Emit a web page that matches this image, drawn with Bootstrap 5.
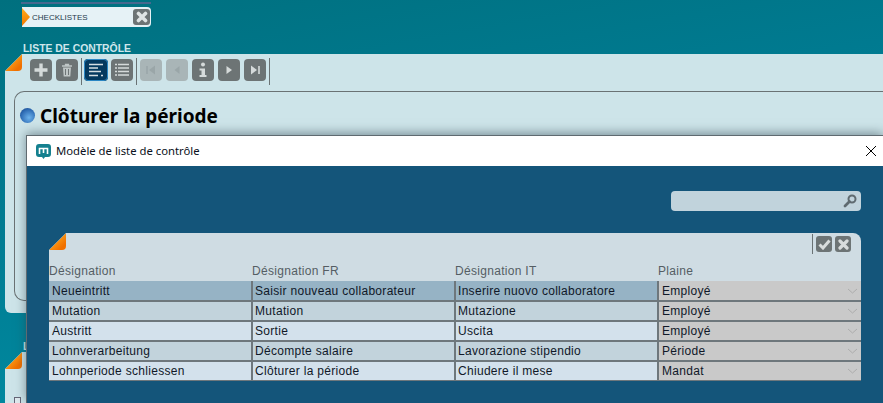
<!DOCTYPE html>
<html lang="fr">
<head>
<meta charset="utf-8">
<title>Checklistes</title>
<link href="https://cdn.jsdelivr.net/npm/bootstrap@5.3.0/dist/css/bootstrap.min.css" rel="stylesheet">
<style>
html,body{height:100%;margin:0;overflow:hidden}
body{font-family:"Liberation Sans",Arial,sans-serif;color:#111;background:#007c93}
.desk{position:relative;width:883px;height:403px;overflow:hidden;background:linear-gradient(170deg,#00707f 0,#007a90 35%,#0091a8 100%)}
.deskline{width:130px;height:2px;margin:2px 0 0 21px;background:#46688e}
.tabchip{width:129px;height:20px;margin:3px 0 0 22px;background:#e6f2f6;border-radius:0 4px 4px 0;position:relative;padding-left:10px;font-size:8px;line-height:21px;color:#243a4c}
.tabarrow{position:absolute;left:0;top:1px;width:8px;height:18px;background:linear-gradient(180deg,#ffab1a,#f07800);clip-path:polygon(0 0,100% 50%,0 100%)}
.tabclose{position:absolute;right:1px;top:2px;width:17px;height:16px;border-radius:3px;background:#6d7475}
.seclabel{margin:14px 0 0 23px;padding-top:2px;font-size:10.4px;line-height:11px;font-weight:700;color:#cfe6ec;height:13px;overflow:hidden}
.seclabel-b{margin-top:26px}
.shell{position:relative;margin-left:5px;background:#cde4e9;clip-path:polygon(17px 0,100% 0,100% 100%,0 100%,0 17px);border-radius:0 0 0 6px}
.shell-a{height:259px;padding:5px 0 0 25px}
.shell-b{height:60px;padding:45px 0 0 9px}
.dogear{position:absolute;left:0;top:0;width:17px;height:17px;background:linear-gradient(135deg,#ffb020 20%,#f07000 80%);clip-path:polygon(100% 0,100% 100%,0 100%);border-bottom-right-radius:4px}
.tools{height:22px;gap:3px}
.toolbtn{width:22px;height:22px;border-radius:4px;background:#6d7475;border:0;padding:0;display:flex;align-items:center;justify-content:center;flex:none}
.toolbtn.grp{margin-right:1px}
.toolbtn.off{background:#a9b5b7}
.toolbtn.on{width:24px;background:#04395f;outline:1px solid #2a86c4;outline-offset:-1px}
.toolsep{width:1px;height:27px;background:#6a7274;flex:none;margin-top:-1px}
.toolsep.tight{margin-right:-1px}
.innerbox{margin:10px 0 0 -16px;height:210px;border:1px solid #6a7274;border-right:0;border-radius:10px 0 0 10px;padding:12px 0 0 5px}
.orb{width:15px;height:15px;border-radius:50%;background:radial-gradient(circle at 60% 65%,#6cb2ec,#2a66b0 65%,#1b3f74);flex:none}
.pagetitle{font-family:"Noto Sans",sans-serif;font-weight:700;font-size:19px;line-height:24px;margin:0 0 0 1px;color:#000}
.tree{width:7px;height:7px;border:1px solid #667;background:#dfe9ee}
.dlg{position:absolute;left:26px;top:135px;width:857px;height:268px;background:#14557a;border-left:1px solid #5f6a70;border-top:1px solid #5f6a70;box-shadow:0 -2px 10px rgba(40,60,70,.5)}
.dlghead{height:30px;background:#fff;padding-left:9px;font-family:"Noto Sans",sans-serif;font-size:11.3px;color:#0a1020}
.dlgtitle{gap:5px}
.dlgx{margin-right:6px;background:none;border:0;padding:0;display:flex}
.finder{width:190px;height:20px;margin:25px 0 0 644px;background:#c1d3dc;border-radius:4px;padding-right:4px}
.gridpanel{position:relative;width:812px;margin:22px 0 0 22px;background:#cfdce3;clip-path:polygon(17px 0,100% 0,100% 100%,0 100%,0 17px);border-top-right-radius:8px;height:148px}
.gridtop{height:29px;padding:1px 10px 0 0;gap:3px}
.gridsep{width:1px;height:20px;background:#6a7274}
.smallbtn{width:16px;height:16px;border-radius:3px;background:#6d7475;border:0;padding:0;display:flex;align-items:center;justify-content:center;margin-top:2px}
.gridtable{width:812px;table-layout:fixed;border-collapse:collapse;font-size:12px;letter-spacing:.3px;margin:0;color:#101828}
.gridtable th{font-weight:400;color:#555e64;height:19px;padding:0 0 2px;line-height:14px;vertical-align:middle;background:transparent;border:0}
.gridtable td{height:20px;padding:0 0 0 2px;line-height:18px;border-bottom:2px solid #6e777c;border-left:2px solid #6e777c;vertical-align:middle;background:#d3e1ec}
.gridtable td:first-child{border-left:0;padding-left:3px}
.gridtable tr.alt td{background:#c2d3dc}
.gridtable tr.sel td{background:#96b3c5}
.gridtable tr td.plaincell{background:#c9c9c9;padding:0;border-right:1px solid #8a8f92}
.gridsel{display:block;width:100%;height:18px;border:0;border-radius:0;background-color:#c9c9c9;font-size:12px;letter-spacing:.3px;line-height:18px;padding:0 0 0 3px;color:#101828;background-size:11px 8px;background-position:right 3px center;background-image:url("data:image/svg+xml,%3csvg xmlns='http://www.w3.org/2000/svg' viewBox='0 0 11 8'%3e%3cpath fill='none' stroke='%23adadad' d='M1 2l4.5 4L10 2'/%3e%3c/svg%3e")}
.gridsel:focus{box-shadow:none}
</style>
</head>
<body>
<div class="desk">
  <div class="deskline"></div>
  <div class="tabchip"><span class="tabarrow"></span>CHECKLISTES
    <span class="tabclose d-flex align-items-center justify-content-center"><svg width="12" height="12" viewBox="0 0 12 12"><path d="M2.500 2.500l7 7M9.500 2.500l-7 7" stroke="#dfe4e4" stroke-width="3.600" stroke-linecap="round"/></svg></span>
  </div>
  <div class="seclabel">LISTE DE CONTRÔLE</div>
  <div class="shell shell-a">
    <span class="dogear"></span>
    <div class="tools d-flex align-items-start">
      <button class="toolbtn grp"><svg width="16" height="16" viewBox="0 0 16 16"><path d="M8 1.500v13M1.500 8h13" stroke="#d5dada" stroke-width="3.400"/></svg></button>
      <button class="toolbtn"><svg width="14" height="15" viewBox="0 0 14 15"><path d="M2 3h10M5.500 3V1.500h3V3" fill="none" stroke="#bfc6c6" stroke-width="1.300"/><path d="M3 4.500h8l-.7 9H3.700z" fill="#bfc6c6"/><path d="M5.500 6v6M8.500 6v6" stroke="#6d7475"/></svg></button>
      <span class="toolsep tight"></span>
      <button class="toolbtn on"><svg width="16" height="14" viewBox="0 0 16 14"><path d="M1 1.500h14M1 5h9M1 8.500h12M1 12.500h9M13 12.500h2" stroke="#d5dee2" stroke-width="1.300"/></svg></button>
      <button class="toolbtn"><svg width="16" height="14" viewBox="0 0 16 14"><path d="M4 1.500h11M4 5h11M4 8.500h11M4 12h11M1 1.500h2M1 5h2M1 8.500h2M1 12h2" stroke="#d5dada" stroke-width="1.400"/></svg></button>
      <span class="toolsep"></span>
      <button class="toolbtn off grp"><svg width="12" height="12" viewBox="0 0 12 12"><path d="M2 2v8" stroke="#9aa6a8" stroke-width="1.500"/><path d="M10 1.500v9L4 6z" fill="#9aa6a8"/></svg></button>
      <button class="toolbtn off grp"><svg width="12" height="12" viewBox="0 0 12 12"><path d="M8.500 2v8L3.500 6z" fill="#9aa6a8"/></svg></button>
      <button class="toolbtn grp"><svg width="12" height="16" viewBox="0 0 12 16"><circle cx="6" cy="2.500" r="2" fill="#d5dada"/><path d="M2.500 6.500h5.500v6.500h1.500v2h-7v-2H4.500V8.500h-2z" fill="#d5dada"/></svg></button>
      <button class="toolbtn grp"><svg width="12" height="12" viewBox="0 0 12 12"><path d="M3.500 2v8L9 6z" fill="#d5dada"/></svg></button>
      <button class="toolbtn"><svg width="12" height="12" viewBox="0 0 12 12"><path d="M2 1.500v9L8 6z" fill="#d5dada"/><path d="M10 2v8" stroke="#d5dada" stroke-width="1.600"/></svg></button>
      <span class="toolsep"></span>
    </div>
    <div class="innerbox d-flex align-items-start gap-1">
      <span class="orb mt-1"></span>
      <h1 class="pagetitle">Clôturer la période</h1>
    </div>
  </div>
  <div class="seclabel seclabel-b">LISTE</div>
  <div class="shell shell-b">
    <span class="dogear"></span>
    <div class="tree"></div>
  </div>

  <div class="dlg">
    <div class="dlghead d-flex align-items-center justify-content-between">
      <div class="dlgtitle d-flex align-items-center">
        <svg width="15" height="15" viewBox="0 0 15 15"><path d="M3 0h9a3 3 0 0 1 3 3v7a3 3 0 0 1-3 3H9l-1.500 2L6 13H3a3 3 0 0 1-3-3V3a3 3 0 0 1 3-3z" fill="#14808f"/><path d="M3.500 10V4.500h8V10M7.500 4.500V9" fill="none" stroke="#fff" stroke-width="1.600"/></svg>
        <span>Modèle de liste de contrôle</span>
      </div>
      <button class="dlgx" aria-label="Fermer"><svg width="12" height="12" viewBox="0 0 12 12"><path d="M1 1l10 10M11 1L1 11" stroke="#000" stroke-width="1"/></svg></button>
    </div>
    <div class="finder d-flex align-items-center justify-content-end">
      <svg width="14" height="14" viewBox="0 0 14 14"><circle cx="9" cy="5" r="3.500" fill="none" stroke="#5f6a70" stroke-width="2"/><path d="M6.500 7.500L2 12" stroke="#5f6a70" stroke-width="2.800" stroke-linecap="round"/></svg>
    </div>
    <div class="gridpanel">
      <span class="dogear"></span>
      <div class="gridtop d-flex justify-content-end align-items-start">
        <span class="gridsep"></span>
        <button class="smallbtn"><svg width="13" height="11" viewBox="0 0 13 11"><path d="M1.500 5.500l3.500 3.500 6.500-7.500" fill="none" stroke="#d8dcdc" stroke-width="3"/></svg></button>
        <button class="smallbtn"><svg width="11" height="11" viewBox="0 0 11 11"><path d="M2 2l7 7M9 2l-7 7" stroke="#d8dcdc" stroke-width="3.200" stroke-linecap="round"/></svg></button>
      </div>
      <table class="gridtable">
        <colgroup><col style="width:203px"><col style="width:203px"><col style="width:203px"><col style="width:203px"></colgroup>
        <thead><tr><th>Désignation</th><th>Désignation FR</th><th>Désignation IT</th><th>Plaine</th></tr></thead>
        <tbody>
          <tr class="sel"><td>Neueintritt</td><td>Saisir nouveau collaborateur</td><td>Inserire nuovo collaboratore</td><td class="plaincell"><select class="form-select gridsel"><option>Employé</option></select></td></tr>
          <tr class="alt"><td>Mutation</td><td>Mutation</td><td>Mutazione</td><td class="plaincell"><select class="form-select gridsel"><option>Employé</option></select></td></tr>
          <tr><td>Austritt</td><td>Sortie</td><td>Uscita</td><td class="plaincell"><select class="form-select gridsel"><option>Employé</option></select></td></tr>
          <tr class="alt"><td>Lohnverarbeitung</td><td>Décompte salaire</td><td>Lavorazione stipendio</td><td class="plaincell"><select class="form-select gridsel"><option>Période</option></select></td></tr>
          <tr><td>Lohnperiode schliessen</td><td>Clôturer la période</td><td>Chiudere il mese</td><td class="plaincell"><select class="form-select gridsel"><option>Mandat</option></select></td></tr>
        </tbody>
      </table>
    </div>
  </div>
</div>
<script src="https://cdn.jsdelivr.net/npm/bootstrap@5.3.0/dist/js/bootstrap.bundle.min.js"></script>
</body>
</html>
